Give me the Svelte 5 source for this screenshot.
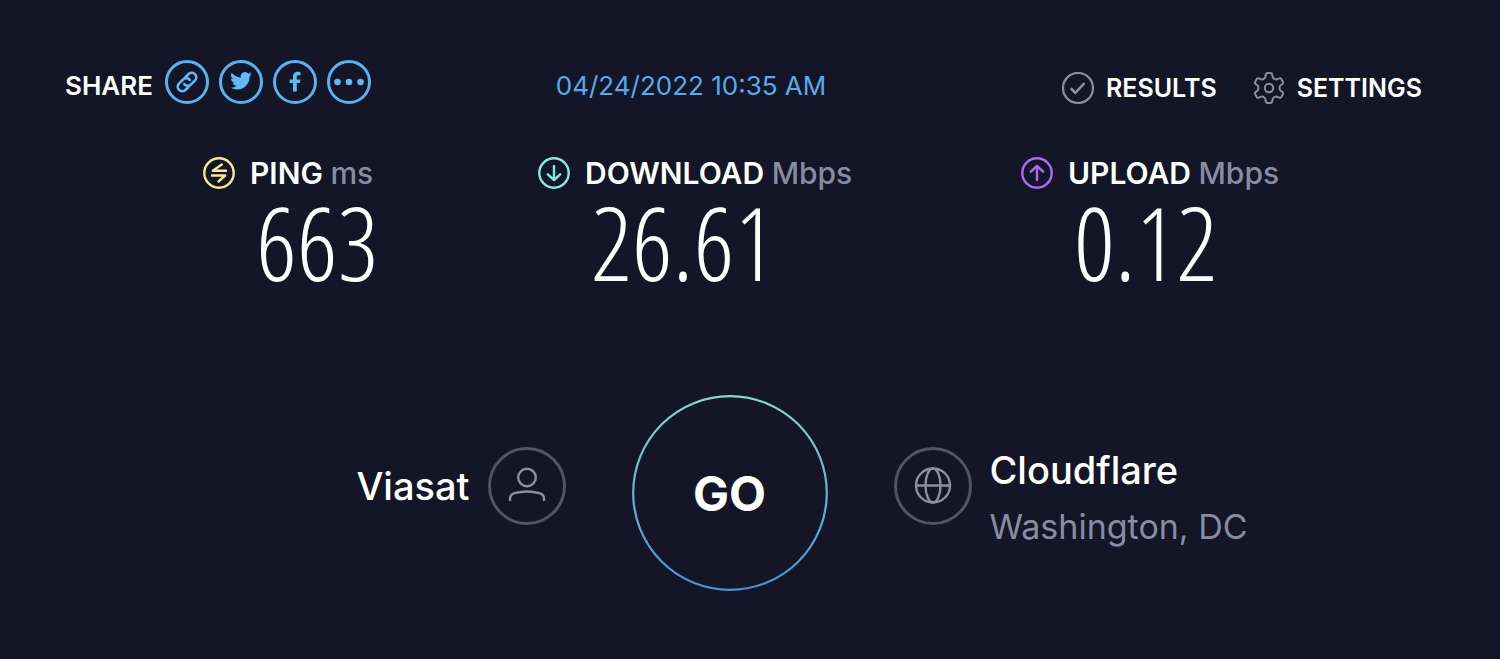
<script>
	const metrics = [
		{ id: 'ping', name: 'PING', unit: 'ms', value: '663' },
		{ id: 'download', name: 'DOWNLOAD', unit: 'Mbps', value: '26.61' },
		{ id: 'upload', name: 'UPLOAD', unit: 'Mbps', value: '0.12' }
	];

	let { isp = 'Viasat', host = 'Cloudflare', location = 'Washington, DC' } = $props();
</script>

<main class="speedtest">
	<header class="top-bar">
		<div class="share">
			<span class="share-label">SHARE</span>
			<button class="share-button" aria-label="Copy link">
				<svg viewBox="0 0 44 44">
					<g transform="translate(10.3 10.3) scale(.975)" fill="none" stroke="currentColor" stroke-width="2.7" stroke-linecap="round">
						<path d="M9.2 14.2a4.6 4.6 0 0 0 7 .2l4.300-4.300a4.700 4.700 0 0 0-6.600-6.600l-3.400 3.400" />
						<path d="M14.800 9.800a4.600 4.600 0 0 0-7-.2l-4.300 4.300a4.700 4.700 0 0 0 6.600 6.600l3.400-3.400" />
					</g>
				</svg>
			</button>
			<button class="share-button" aria-label="Share on Twitter">
				<svg viewBox="0 0 44 44">
					<path transform="translate(11.200 10) scale(.9)" fill="currentColor" d="M23.95 4.57a10 10 0 0 1-2.82.77 4.96 4.96 0 0 0 2.16-2.72c-.95.55-2 .95-3.13 1.18a4.92 4.92 0 0 0-8.38 4.48C7.69 8.1 4.07 6.13 1.64 3.16a4.92 4.92 0 0 0 1.52 6.57 4.9 4.9 0 0 1-2.23-.61v.06a4.92 4.92 0 0 0 3.95 4.83 5 5 0 0 1-2.21.08 4.94 4.94 0 0 0 4.6 3.42A9.87 9.87 0 0 1 0 19.54a13.99 13.99 0 0 0 7.55 2.21c9.05 0 14-7.5 14-13.98 0-.21 0-.42-.02-.63a9.94 9.94 0 0 0 2.42-2.57z" />
				</svg>
			</button>
			<button class="share-button" aria-label="Share on Facebook">
				<svg viewBox="0 0 44 44">
					<path fill="currentColor" d="M20 31.500V23h-3.400v-3.600H20v-2.700c0-3.500 2-5 4.900-5 1.300 0 2.200.1 2.600.2v3.300h-1.900c-1.500 0-1.800.8-1.800 1.800v2.400h3.600l-.5 3.600h-3.100v8.500z" />
				</svg>
			</button>
			<button class="share-button" aria-label="More options">
				<svg viewBox="0 0 44 44" fill="currentColor">
					<circle cx="10.5" cy="22" r="3.3" />
					<circle cx="22" cy="22" r="3.3" />
					<circle cx="33.5" cy="22" r="3.3" />
				</svg>
			</button>
		</div>

		<time class="date" datetime="2022-04-24T10:35">04/24/2022 10:35 AM</time>

		<nav class="links">
			<a href="#results">
				<svg viewBox="0 0 32 32" fill="none" stroke="currentColor">
					<circle cx="16" cy="16" r="15" stroke-width="2.200" />
					<path d="M9.5 17l3.8 3.8 8.5-9" stroke-width="2.6" stroke-linecap="round" stroke-linejoin="round" />
				</svg>
				RESULTS
			</a>
			<a href="#settings">
				<svg viewBox="0 0 32 32" fill="none" stroke="currentColor" stroke-width="2" stroke-linejoin="round">
					<circle cx="16" cy="16" r="4.2" />
					<path d="M12.800 2.500q.3-1.500 1.700-1.500h3q1.400 0 1.700 1.500l.4 2.200q.3 1.500 1.700 2.200 1.400.8 2.800.3l2.100-.8q1.400-.5 2.100.7l1.500 2.600q.7 1.200-.4 2.200l-1.700 1.400q-1.200 1-1.200 2.700t1.200 2.700l1.700 1.400q1.100 1 .4 2.200l-1.500 2.600q-.7 1.200-2.100.7l-2.100-.8q-1.400-.5-2.800.3-1.400.7-1.700 2.200l-.4 2.200q-.3 1.500-1.700 1.500h-3q-1.400 0-1.700-1.500l-.4-2.200q-.3-1.500-1.700-2.200-1.400-.8-2.800-.3l-2.100.8q-1.400.5-2.100-.7l-1.500-2.600q-.7-1.200.4-2.200l1.700-1.400q1.200-1 1.200-2.700t-1.200-2.700l-1.700-1.400q-1.100-1-.4-2.200l1.500-2.600q.7-1.200 2.100-.7l2.100.8q1.400.5 2.800-.3 1.400-.7 1.700-2.200z" />
				</svg>
				SETTINGS
			</a>
		</nav>
	</header>

	<section class="metrics">
		{#each metrics as metric}
			<div class="metric">
				<svg class={'metric-icon ' + metric.id} viewBox="0 0 32 32" fill="none" stroke="currentColor" stroke-width="2.400" stroke-linecap="round" stroke-linejoin="round">
					<circle cx="16" cy="16" r="14.700" />
					{#if metric.id == 'ping'}
						<path d="M18.800 7.500L9.800 13.700H23M9 18.500h13.200L15.500 24.500" />
					{:else if metric.id == 'download'}
						<path d="M16 9v14M9.800 17.300l6.200 5.700 6.200-5.700" />
					{:else}
						<path d="M16 23V9M9.800 14.700L16 9l6.200 5.700" />
					{/if}
				</svg>
				<h2 class="metric-title">{metric.name} <span class="unit">{metric.unit}</span></h2>
				<p class="metric-value">{metric.value}</p>
			</div>
		{/each}
	</section>

	<section class="runner">
		<div class="isp">
			<span class="name">{isp}</span>
			<svg class="round-icon" viewBox="0 0 78 78" fill="none" stroke="currentColor">
				<circle class="ring" cx="39" cy="39" r="37.500" />
				<circle cx="39" cy="30.500" r="8.800" />
				<path d="M22 54V52c0-3.500 1.500-5 4.500-5.800 8-2.200 17-2.200 25 0 3 .8 4.500 2.300 4.500 5.800v2" />
			</svg>
		</div>

		<button class="go">
			<svg viewBox="0 0 196 196" fill="none">
				<defs>
					<linearGradient id="go-ring" x1="0" y1="0" x2="0" y2="1">
						<stop offset="0" stop-color="#7fdcd3" />
						<stop offset="0.500" stop-color="#62b5c9" />
						<stop offset="1" stop-color="#4d8fce" />
					</linearGradient>
				</defs>
				<circle cx="98" cy="98" r="96.800" stroke="url(#go-ring)" stroke-width="2.200" />
			</svg>
			<span>GO</span>
		</button>

		<div class="server">
			<svg class="round-icon" viewBox="0 0 78 78" fill="none" stroke="currentColor">
				<circle class="ring" cx="39" cy="39" r="37.500" />
				<circle cx="39" cy="38.500" r="17" />
				<ellipse cx="39" cy="38.500" rx="7.500" ry="17" />
				<path d="M22 38.500h34" />
			</svg>
			<div>
				<div class="name">{host}</div>
				<div class="location">{location}</div>
			</div>
		</div>
	</section>
</main>

<style>
	:global(body) {
		margin: 0;
		background: #141526;
	}

	.speedtest {
		box-sizing: border-box;
		min-height: 100vh;
		padding: 60px 0;
		color: #fff;
		background: #141526;
		font-family: Inter, "Open Sans", sans-serif;
	}

	svg {
		display: block;
		flex: none;
	}

	button {
		padding: 0;
		border: 0;
		background: none;
		color: inherit;
		font: inherit;
		cursor: pointer;
	}

	.top-bar {
		display: grid;
		grid-template-columns: 491fr auto 596fr;
		align-items: end;
		padding: 0 78px 0 65px;
		font-size: 26px;
		line-height: 36px;
	}

	.share {
		display: flex;
		align-items: flex-end;
		gap: 10px;
	}

	.share-label {
		margin-right: 2px;
		font-weight: 600;
	}

	.share-button {
		box-sizing: border-box;
		width: 44px;
		height: 44px;
		border: 3px solid #5cb0ec;
		border-radius: 50%;
		color: #5fb8f8;
	}

	.share-button svg {
		margin: -3px;
		width: 44px;
		height: 44px;
	}

	.date {
		color: #58aaea;
	}

	.links {
		display: flex;
		justify-content: flex-end;
		gap: 36px;
		font-size: 25px;
		line-height: 32px;
	}

	.links a {
		display: flex;
		gap: 12px;
		color: #fff;
		font-weight: 600;
		text-decoration: none;
	}

	.links svg {
		width: 32px;
		height: 32px;
		color: #8b8c9f;
	}

	.metrics {
		display: grid;
		grid-template-columns: 335fr 483fr 414fr;
		padding: 53px 65px 0 203px;
	}

	.metric {
		display: grid;
		grid-template-columns: 32px 1fr;
		column-gap: 15px;
	}

	.metric-icon {
		width: 32px;
		height: 32px;
	}

	.ping {
		color: #f5ea8f;
	}

	.download {
		color: #80ece4;
	}

	.upload {
		color: #ad6cf0;
	}

	.metric-title {
		margin: 0;
		font-size: 30px;
		font-weight: 600;
		line-height: 32px;
	}

	.unit {
		color: #8a8ba2;
		font-weight: 500;
	}

	.metric-value {
		grid-column: 2;
		margin: 0;
		padding-left: 6px;
		font-family: "Open Sans Condensed Light", "Open Sans Condensed", "Open Sans", sans-serif;
		font-size: 102px;
		font-weight: 300;
		line-height: 106px;
	}

	.runner {
		display: grid;
		grid-template-columns: 1fr auto 1fr;
		align-items: start;
		column-gap: 66px;
		padding: 100px 41px 0 0;
	}

	.isp,
	.server {
		display: flex;
		gap: 18px;
		padding-top: 52px;
	}

	.isp {
		justify-content: flex-end;
		align-items: center;
	}

	.round-icon {
		width: 78px;
		height: 78px;
		color: #8d8ea1;
		stroke-width: 2.400;
	}

	.ring {
		stroke: #525365;
		stroke-width: 3;
	}

	.name {
		font-size: 38px;
		font-weight: 500;
		line-height: 46px;
	}

	.location {
		margin-top: 12px;
		color: #8a8ba2;
		font-size: 34px;
		line-height: 44px;
	}

	.go {
		display: grid;
		place-items: center;
		width: 196px;
		height: 196px;
		font-size: 48px;
		font-weight: 700;
	}

	.go svg,
	.go span {
		grid-area: 1 / 1;
	}

	.go svg {
		width: 196px;
		height: 196px;
	}
</style>
